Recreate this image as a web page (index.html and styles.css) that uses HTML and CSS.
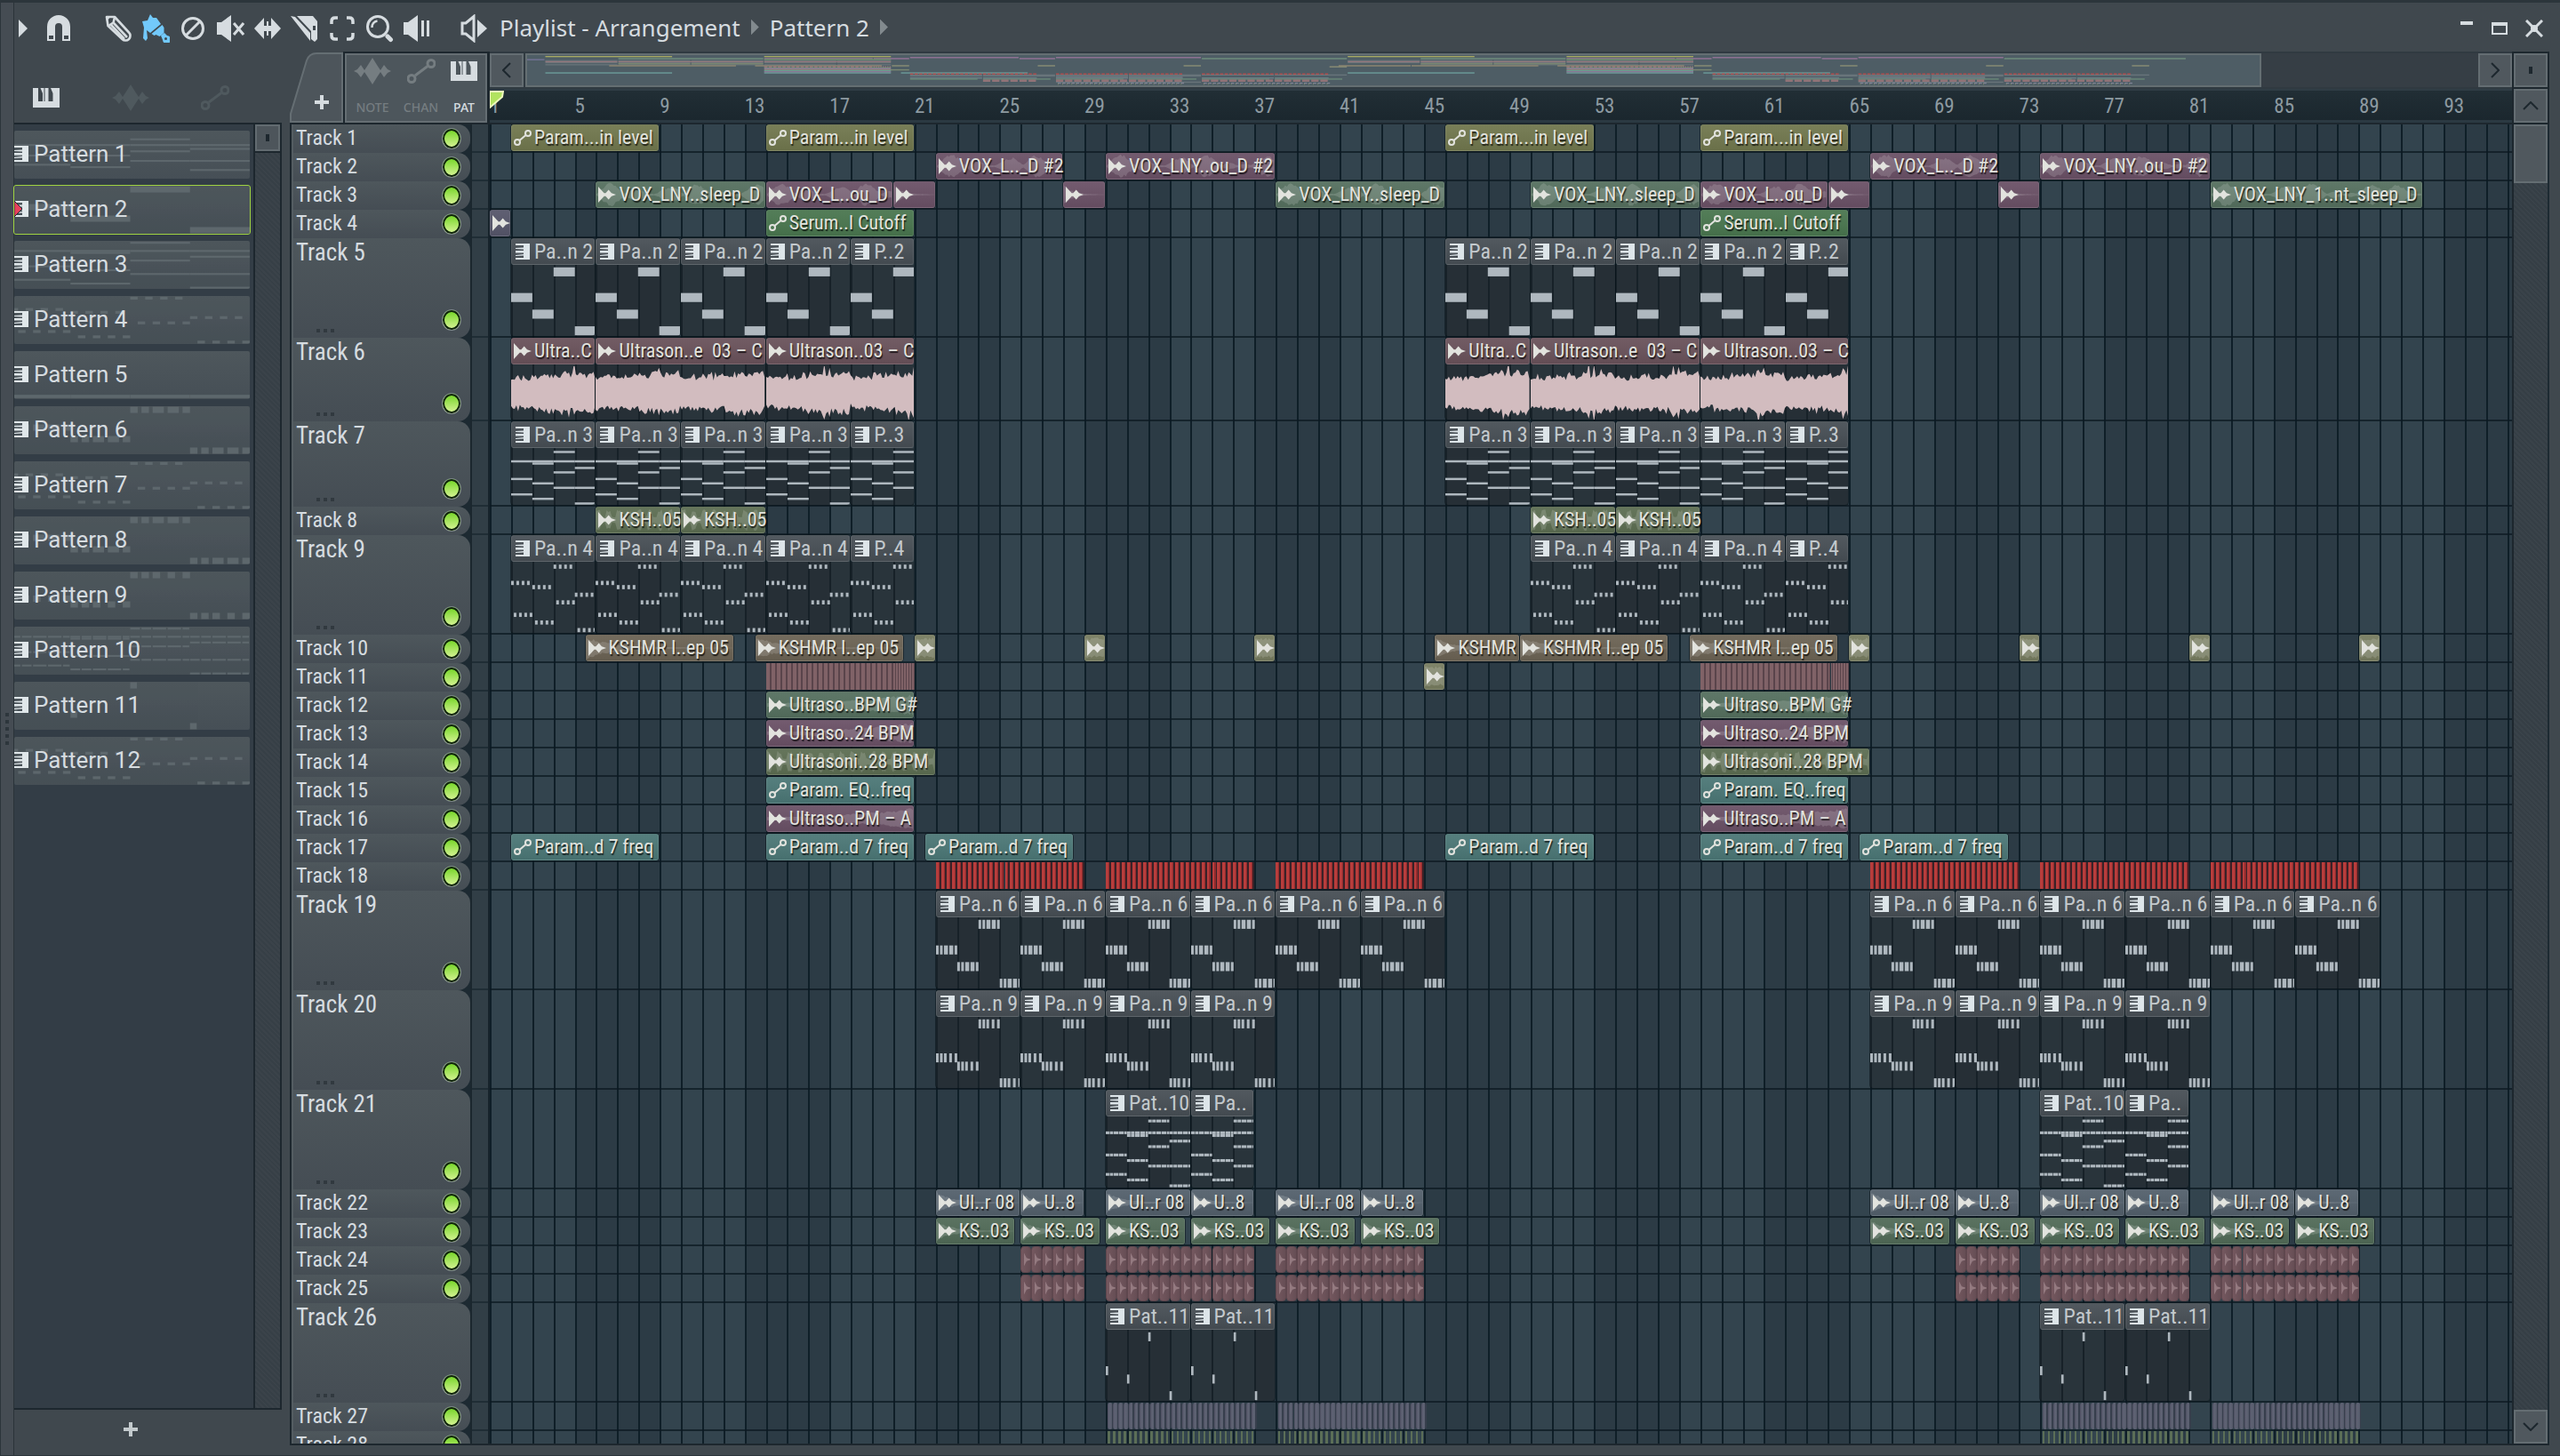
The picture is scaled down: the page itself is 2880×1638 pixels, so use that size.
FILE: index.html
```html
<!DOCTYPE html>
<html lang="en">
<head>
    <meta charset="UTF-8">
    <meta name="viewport" content="width=device-width, initial-scale=1.0">
    <title>Playlist - Arrangement</title>
    <link rel="stylesheet" href="styles.css">
</head>
<body>

    <!-- Shared icons -->
    <svg class="icon-defs" aria-hidden="true">
        <symbol id="i-piano" viewBox="0 0 30 22">
            <path fill="currentColor" d="M0 0h6v15h5V6L8.500 0H12.500v15h1V0h4v15h5V6L20 0h4v15h0V0h6v22H0z"/>
        </symbol>
        <symbol id="i-wave" viewBox="0 0 42 30">
            <path fill="currentColor" d="M0 15l4-2 4-5 4 6 4-6 5-8 5 8 4 6 4-6 4 5 4 2-4 2-4 5-4-6-4 6-5 8-5-8-4-6-4 6-4-5z"/>
        </symbol>
        <symbol id="i-auto" viewBox="0 0 32 28">
            <g fill="none" stroke="currentColor" stroke-width="3">
                <circle cx="5" cy="22.500" r="4"/>
                <circle cx="27" cy="5.500" r="4"/>
                <path d="M9 19L23 8.500"/>
            </g>
        </symbol>
        <symbol id="i-pattern" viewBox="0 0 16 18">
            <path fill="currentColor" d="M0 0h16v18H0v-2h9v-2.500L0 14v-1l9-1v-1.500H0v-2.500h9V6.500L0 6V5l9-.5V2H0z"/>
        </symbol>
        <symbol id="i-audio" viewBox="0 0 18 16">
            <path fill="currentColor" d="M0 0l6 6.500h1.500L10.500 3l3 3.500 4.500 1.500-4.500 1.500-3 3.500-3-3.500H6L0 16z"/>
        </symbol>
        <symbol id="i-node" viewBox="0 0 20 18">
            <g fill="none" stroke="currentColor" stroke-width="2">
                <circle cx="4" cy="14" r="3"/>
                <circle cx="16" cy="4" r="3"/>
                <path d="M6.500 12L13.500 6"/>
            </g>
        </symbol>
        <symbol id="i-plus" viewBox="0 0 16 16">
            <path fill="currentColor" d="M6 0h4v6h6v4h-6v6H6v-6H0V6h6z"/>
        </symbol>
    </svg>

    <div class="window">
        <div class="gutter"><i></i><i></i><i></i><i></i><i></i></div>

        <div class="main">
            <header class="titlebar">
                <button class="tool tool-menu" aria-label="Menu"><svg width="10" height="20" viewBox="0 0 10 20"><path fill="currentColor" d="M0 0l10 10L0 20z"/></svg></button>
                <button class="tool tool-snap" aria-label="Snap"><svg width="32" height="32" viewBox="0 0 32 32"><path fill="currentColor" fill-rule="evenodd" d="M3 30V14a13 13 0 0 1 26 0v16h-9V14a4 4 0 0 0-8 0v16zM5 24h5v4H5zM22 24h5v4h-5z"/></svg></button>

                <div class="tools">
                    <button class="tool" aria-label="Draw"><svg width="32" height="32" viewBox="0 0 32 32"><g fill="none" stroke="currentColor" stroke-width="2.600" stroke-linejoin="round"><path d="M3 3h9l16 17.500a5 5 0 0 1-7.500 7.500L4.500 13z"/><path d="M12 3.500l-1.500 6L5 13M10.500 9.500L26 26M7.500 11.500L23 28"/></g><path fill="currentColor" d="M2 2h6L3 8z"/></svg></button>
                    <button class="tool active" aria-label="Paint"><svg width="32" height="32" viewBox="0 0 32 32"><path fill="currentColor" d="M1 8l6-1 3-7 3 4h4l5 7L10 21l-4-3 1 9-2 3-3-3 1-12zM11.500 22L23.500 12l2 3 0 6-5 4-4-2-2 1zM22 24l4-3 3 3a4.500 4.500 0 1 1-5 5z"/><circle cx="27.500" cy="27.500" r="1.500" fill="#40484e"/></svg></button>
                    <button class="tool" aria-label="Delete"><svg width="32" height="32" viewBox="0 0 32 32"><g fill="none" stroke="currentColor" stroke-width="3"><circle cx="16" cy="16" r="11.500"/><path d="M8 24L24 8"/></g></svg></button>
                    <button class="tool" aria-label="Mute"><svg width="32" height="32" viewBox="0 0 32 32"><path fill="currentColor" d="M1 9h5L17 1v30L6 23H1z"/><path fill="none" stroke="currentColor" stroke-width="3" d="M20 10l11 13M31 10L20 23"/></svg></button>
                    <button class="tool" aria-label="Slip"><svg width="32" height="32" viewBox="0 0 32 32"><path fill="currentColor" d="M1 16L12 4v9h3V8h2v5h3V4l11 12-11 12v-9h-3v5h-2v-5h-3v9z"/></svg></button>
                    <button class="tool" aria-label="Slice"><svg width="32" height="32" viewBox="0 0 32 32"><path fill="currentColor" fill-rule="evenodd" d="M0 2l5 1 17 18V30zM7 2h18l5 6v20l-3 3-4-3V19zM25 13v5h3v-5z"/></svg></button>
                    <button class="tool" aria-label="Select"><svg width="32" height="32" viewBox="0 0 32 32"><path fill="none" stroke="currentColor" stroke-width="3.500" d="M4 11V8q0-4 4-4h3M21 4h3q4 0 4 4v3M28 21v3q0 4-4 4h-3M11 28H8q-4 0-4-4v-3"/></svg></button>
                    <button class="tool" aria-label="Zoom"><svg width="32" height="32" viewBox="0 0 32 32"><g fill="none" stroke="currentColor"><circle cx="14" cy="14" r="11.500" stroke-width="3"/><path stroke-width="2.500" d="M7.500 15a7 7 0 0 1 6-7.500"/><path stroke-width="5" stroke-linecap="round" d="M25 25l3.500 3.500"/></g></svg></button>
                    <button class="tool" aria-label="Play"><svg width="32" height="32" viewBox="0 0 32 32"><path fill="currentColor" d="M1 9h5L17 1v30L6 23H1zM21 7h3v18h-3zM27 7h3v18h-3z"/></svg></button>
                </div>

                <button class="tool tool-speaker" aria-label="Scrub"><svg width="32" height="32" viewBox="0 0 32 32"><path fill="none" stroke="currentColor" stroke-width="3" d="M3 10h4l9-7.500v27L7 22H3z"/><path fill="currentColor" d="M20 6l11 10-11 10z"/></svg></button>
                <nav class="crumbs">
                    <a href="#arrangement">Playlist - Arrangement</a>
                    <span class="crumb-arrow"></span>
                    <a href="#pattern">Pattern 2</a>
                    <span class="crumb-arrow"></span>
                </nav>

                <div class="window-buttons">
                    <button aria-label="Minimize"><svg width="16" height="20" viewBox="0 0 16 20"><path fill="currentColor" d="M1 2h14v4H1z"/></svg></button>
                    <button aria-label="Maximize"><svg width="18" height="20" viewBox="0 0 18 20"><path fill="currentColor" fill-rule="evenodd" d="M0 3h18v14H0zM2 7v8h14V7z"/></svg></button>
                    <button aria-label="Close"><svg width="20" height="20" viewBox="0 0 20 20"><path fill="none" stroke="currentColor" stroke-width="3" d="M1 1l18 18M19 1L1 19"/><circle cx="10" cy="10" r="4" fill="currentColor"/></svg></button>
                </div>
            </header>

            <div class="workspace">
                <aside class="picker">
                    <div class="picker-tabs">
                        <button class="on" aria-label="Patterns"><svg width="30" height="22"><use href="#i-piano"/></svg></button>
                        <button aria-label="Audio"><svg width="42" height="30"><use href="#i-wave"/></svg></button>
                        <button aria-label="Automation"><svg width="32" height="28"><use href="#i-auto"/></svg></button>
                    </div>
                    <div class="picker-body">
                        <ul class="patterns" id="patterns"></ul>
                        <div class="picker-scroll"><button class="square-btn" aria-label="Picker options"><i></i></button></div>
                    </div>
                    <div class="picker-footer">
                        <button aria-label="Add pattern"><svg width="16" height="16"><use href="#i-plus"/></svg></button>
                    </div>
                </aside>

                <section class="playlist">
                    <div class="corner">
                        <button class="add-tab" aria-label="Add track">
                            <svg class="tab-shape" width="60" height="80" viewBox="0 0 60 80"><path d="M1 79V70L19 10Q22 2 30 2H59V79z"/></svg>
                            <svg class="tab-plus" width="16" height="16"><use href="#i-plus"/></svg>
                        </button>
                        <div class="modes">
                            <button><svg width="42" height="30"><use href="#i-wave"/></svg>NOTE</button>
                            <button><svg width="32" height="28"><use href="#i-auto"/></svg>CHAN</button>
                            <button class="on"><svg width="30" height="22"><use href="#i-piano"/></svg>PAT</button>
                        </div>
                    </div>

                    <div class="top">
                        <div class="overview">
                            <button class="frame-btn" aria-label="Scroll left"><svg width="10" height="18" viewBox="0 0 10 18"><path d="M9 1L1 9l8 8"/></svg></button>
                            <div class="overview-track">
                                <svg class="overview-map" id="map" viewBox="0 0 95 34" preserveAspectRatio="none"></svg>
                            </div>
                            <button class="frame-btn" aria-label="Scroll right"><svg width="10" height="18" viewBox="0 0 10 18"><path d="M1 1l8 8-8 8"/></svg></button>
                        </div>
                        <div class="ruler" id="ruler">
                            <svg class="playhead" width="16" height="20" viewBox="0 0 16 20"><path d="M0 1h15L14 7 0 19z"/></svg>
                        </div>
                    </div>

                    <div class="side-top">
                        <button class="frame-btn" aria-label="Playlist options"><i></i></button>
                        <button class="frame-btn" aria-label="Scroll up"><svg width="18" height="10" viewBox="0 0 18 10"><path d="M1 9l8-8 8 8"/></svg></button>
                    </div>

                    <div class="tracks">
                        <ul class="heads" id="heads"></ul>
                        <div class="strip" id="strip"></div>
                        <div class="timeline">
                            <div class="bars" id="bars"></div>
                            <div class="lanes" id="lanes"></div>
                        </div>
                    </div>

                    <div class="side-scroll">
                        <div class="thumb"></div>
                        <button class="frame-btn" aria-label="Scroll down"><svg width="18" height="10" viewBox="0 0 18 10"><path d="M1 1l8 8 8-8"/></svg></button>
                    </div>
                </section>
            </div>
        </div>
    </div>

    <script src="script.js"></script>
</body>
</html>
```
FILE: styles.css
```css
:root {
    /* 95.2 bars are visible in the timeline */
    --bar: calc(100cqw / 95.2);
    --frame: #40484e;
    --edge: #1d272e;
    --panel: #333d46;
    --light: #d6dce0;
    --narrow: "Roboto Condensed", "Liberation Sans", sans-serif;
}

* {
    box-sizing: border-box;
}

body {
    margin: 0;
    background: var(--frame);
    color: var(--light);
    font-family: "Noto Sans", sans-serif;
    overflow: hidden;
}

button {
    margin: 0;
    padding: 0;
    border: 0;
    background: none;
    color: inherit;
    font: inherit;
}

ul {
    margin: 0;
    padding: 0;
    list-style: none;
}

svg {
    display: block;
    flex: none;
}

.icon-defs {
    position: absolute;
    width: 0;
    height: 0;
}

.window {
    display: flex;
    height: 100vh;
    border-top: 3px solid #2c353b;
    border-bottom: 1px solid #2c353b;
}

.gutter {
    flex: none;
    display: flex;
    flex-direction: column;
    align-items: center;
    justify-content: center;
    gap: 4px;
    width: 16px;
    border-left: 1px solid #2c353b;
    border-right: 1px solid #2a3339;
    background: #454c53;
}

.gutter i {
    width: 4px;
    height: 4px;
    background: #2d363c;
}

.main {
    flex: 1;
    min-width: 0;
    display: flex;
    flex-direction: column;
}

/* Title bar */
.titlebar {
    flex: none;
    display: flex;
    align-items: center;
    height: 55px;
    padding-top: 2px;
}

.tool {
    flex: none;
    display: flex;
    align-items: center;
    justify-content: center;
    width: 42px;
    height: 40px;
}

.tool-menu {
    width: 20px;
}

.tool-snap {
    margin-left: 9px;
}

.tools {
    display: flex;
    margin-left: 25px;
}

.active {
    color: #72c9fb;
}

.tool-speaker {
    margin-left: 22px;
}

.crumbs {
    display: flex;
    align-items: center;
    gap: 12px;
    margin-left: 8px;
    padding-bottom: 2px;
    font-size: 26px;
    line-height: 32px;
}

.crumbs a {
    color: var(--light);
    text-decoration: none;
}

.crumb-arrow {
    width: 9px;
    height: 18px;
    background: #828a8e;
    clip-path: polygon(0 0, 100% 50%, 0 100%);
}

.window-buttons {
    display: flex;
    gap: 20px;
    margin-left: auto;
    margin-right: 19px;
}

.workspace {
    flex: 1;
    min-height: 0;
    display: flex;
}

/* Pattern picker */
.picker {
    flex: none;
    display: flex;
    flex-direction: column;
    width: 301px;
    margin-right: 9px;
}

.picker-tabs {
    flex: none;
    display: flex;
    align-items: center;
    height: 80px;
    padding: 24px 0 0 15px;
}

.picker-tabs button {
    display: flex;
    align-items: center;
    justify-content: center;
    width: 42px;
    margin-right: 53px;
    color: #4f595e;
}

.picker-tabs .on {
    color: var(--light);
}

.picker-body {
    flex: 1;
    min-height: 0;
    display: flex;
    border-top: 2px solid var(--edge);
    border-bottom: 2px solid var(--edge);
    border-right: 2px solid var(--edge);
    background: var(--panel);
}

.patterns {
    flex: 1;
    min-width: 0;
    display: flex;
    flex-direction: column;
    gap: 8px;
    padding: 7px 4px 0 0;
}

.pattern {
    position: relative;
    display: flex;
    align-items: center;
    gap: 6px;
    height: 54px;
    padding-bottom: 2px;
    border-radius: 2px;
    background: linear-gradient(#4e575c, #464f56);
    overflow: hidden;
    font: 26px/32px "Roboto", sans-serif;
}

.pattern svg {
    color: #e0e7ea;
}

.pattern .use-icon,
.pattern span {
    position: relative;
}

.pattern .notes {
    position: absolute;
    right: 0;
    top: 0;
    width: calc(100% + 4px);
    height: 100%;
    fill: #636d72;
    opacity: .8;
}

.pattern.selected {
    outline: 1px solid #9fd341;
}

.pattern .marker {
    position: absolute;
    left: 0;
    color: #e8415c;
}

.picker-scroll {
    flex: none;
    width: 30px;
    border-left: 2px solid var(--edge);
    background: repeating-linear-gradient(45deg, #363f46 0 2px, #3b434a 2px 4px);
}

.square-btn {
    display: flex;
    align-items: center;
    justify-content: center;
    width: 28px;
    height: 30px;
    border: 2px solid #626b70;
    background: #4d555b;
    box-shadow: 0 2px 0 var(--edge);
}

.square-btn i,
.frame-btn i {
    width: 4px;
    height: 8px;
    background: #1d272e;
}

.picker-footer {
    flex: none;
    height: 51px;
    padding: 13px 0 0 123px;
    color: #c3cacd;
}

/* Playlist */
.playlist {
    flex: 1;
    min-width: 0;
    display: grid;
    grid-template-columns: 223px 1fr 42px;
    grid-template-rows: 82px minmax(0, 1fr);
    margin: 0 12px 11px 0;
    border-left: 2px solid var(--edge);
    border-bottom: 2px solid var(--edge);
    background: #1d2a32;
}

.corner {
    display: flex;
    background: var(--edge);
    border-bottom: 2px solid var(--edge);
}

.add-tab {
    position: relative;
    width: 60px;
    height: 80px;
    margin-left: -2px;
    background: var(--frame);
}

.tab-shape {
    fill: #4d555b;
    stroke: #656e73;
    stroke-width: 2;
}

.tab-plus {
    position: absolute;
    left: 28px;
    top: 49px;
}

.modes {
    display: flex;
    align-items: flex-start;
    justify-content: space-between;
    flex: 1;
    margin: 2px 3px 0 2px;
    padding: 2px 9px 0 8px;
    border: 2px solid #656e73;
    background: #4d565c;
}

.modes button {
    display: grid;
    grid-template-rows: 32px 50px;
    place-items: center;
    height: 66px;
    font-size: 14px;
    font-weight: 500;
    line-height: 30px;
    color: #757d81;
}

.modes .on {
    color: var(--light);
}

.top {
    container-type: inline-size;
    display: flex;
    flex-direction: column;
    border-bottom: 2px solid var(--edge);
}

.overview {
    display: flex;
    height: 42px;
    padding-top: 2px;
    background: #303a41;
}

.frame-btn {
    flex: none;
    display: flex;
    align-items: center;
    justify-content: center;
    width: 38px;
    height: 38px;
    border: 2px solid #646d72;
    background: #50585e;
}

.frame-btn svg {
    fill: none;
    stroke: #1d272e;
    stroke-width: 2;
}

.overview-track {
    flex: 1;
    height: 38px;
    margin-left: 2px;
    padding-right: 244px;
    background: #363e45;
}

.overview-map {
    width: 100%;
    height: 38px;
    border: 2px solid #646e72;
    background: #4e5d65;
}

.ruler {
    position: relative;
    flex: 1;
    border-top: 2px solid #303d45;
    border-bottom: 3px solid #2b3942;
    background: linear-gradient(#212e35, #1b272e);
    font: 23px/36px var(--narrow);
    color: #8d9aa1;
    overflow: hidden;
}

.ruler span {
    position: absolute;
    top: 0;
}

.playhead {
    position: absolute;
    left: 0;
    top: 0;
    z-index: 1;
    fill: #b2e35f;
    stroke: #eef9bd;
    stroke-width: 2;
}

.side-top {
    display: flex;
    flex-direction: column;
    gap: 2px;
    padding: 2px 0 0 2px;
    background: var(--edge);
}

.side-scroll {
    display: flex;
    flex-direction: column;
    justify-content: space-between;
    margin-right: 2px;
    border-left: 2px solid var(--edge);
    background: repeating-linear-gradient(45deg, #353e45 0 2px, #3a434a 2px 4px);
}

.side-scroll .thumb {
    height: 66px;
    border: 2px solid #646d72;
    background: #50585e;
}

.tracks {
    grid-column: span 2;
    min-height: 0;
    display: grid;
    grid-template-columns: 201px 22px minmax(0, 1fr);
    overflow: hidden;
}

.head {
    position: relative;
    display: flex;
    align-items: flex-end;
    justify-content: space-between;
    height: 32px;
    padding: 0 10px 4px 3px;
    border-left: 2px solid #545d62;
    border-radius: 0 14px 14px 0;
    background: linear-gradient(#4e575c, #454d54);
    font: 24px/30px var(--narrow);
}

.head label {
    align-self: flex-start;
}

.head:not(.h32) {
    font-size: 27px;
    line-height: 32px;
    padding-bottom: 8px;
}

.dots {
    position: absolute;
    left: 26px;
    bottom: 6px;
    display: flex;
    gap: 4px;
}

.dots i {
    width: 4px;
    height: 4px;
    background: #31393f;
}

.head input {
    appearance: none;
    flex: none;
    width: 22px;
    height: 24px;
    margin: 0;
    border: 1px solid #7c8688;
    border-radius: 50%;
    background: linear-gradient(#6fd321, #dcf59b);
    box-shadow: inset 0 0 0 2px #10240c;
}

.h32 { height: 32px; }
.h94 { height: 94px; }
.h96 { height: 96px; }
.h112 { height: 112px; }

.strip {
    border-right: 2px solid #17232b;
    border-left: 2px solid #1b272e;
    background: #313e46;
}

.strip div {
    border-bottom: 2px solid #1f2d35;
}

.timeline {
    container-type: inline-size;
    position: relative;
    min-width: 0;
    background: #2c3b45;
    overflow: hidden;
}

/* Bar lines sit behind the lanes */
.bars {
    position: absolute;
    inset: 0;
    display: flex;
}

.bars i {
    flex: 0 0 var(--bar);
    border-left: 2px solid #0f1f28;
    background: #2c3b45;
}

.bars i:nth-child(8n+1),
.bars i:nth-child(8n+2),
.bars i:nth-child(8n+3),
.bars i:nth-child(8n+4) {
    background: #33444e;
}

.lane {
    position: relative;
    border-bottom: 2px solid rgba(12, 26, 34, .75);
}

/* Clips */
.clip {
    position: absolute;
    top: 0;
    height: 100%;
    border-radius: 3px;
    outline: 1px solid rgba(8, 18, 24, .55);
}

.clip-head {
    position: relative;
    display: flex;
    align-items: center;
    gap: 3px;
    height: 30px;
    padding-left: 2px;
    border-radius: 3px;
    border: 1px solid rgba(255, 255, 255, .08);
    background-image: linear-gradient(rgba(255, 255, 255, .06), rgba(0, 0, 0, .06));
    font: 22px/26px var(--narrow);
    color: #e2e3de;
    white-space: pre;
    text-shadow: 1px 2px 1px rgba(0, 0, 0, .7);
}

.clip-head svg,
.clip-head span {
    position: relative;
}

.clip-head .wave {
    position: absolute;
    inset: 0;
    width: 100%;
    height: 100%;
    fill: rgba(255, 255, 255, .15);
}

.clip-body {
    height: calc(100% - 30px);
    padding-top: 2px;
    background: rgba(32, 36, 40, .5);
    overflow: hidden;
}

.clip-body .notes {
    width: calc(var(--bar) * 4);
    height: 100%;
    fill: #afb8bf;
}

.clip-body .audio {
    width: 100%;
    height: 100%;
    fill: #d2bcbf;
}

.pat { background-color: #474f55; }
.olive { background-color: #71774e; }
.sage { background-color: #55705f; }
.plum { background-color: #6a5166; }
.green { background-color: #49764f; }
.mauve { background-color: #56566a; }
.wine { background-color: #69525a; }
.moss { background-color: #5c6d52; }
.brown { background-color: #6b6354; }
.kick { background-color: #777c60; }
.teal { background-color: #4b7776; }
.slate { background-color: #53606b; }
.fern { background-color: #516a57; }

.pat.clip-head {
    font-size: 24px;
    color: #c3c9cd;
    text-shadow: none;
}

.pat svg {
    color: #dde5e9;
}

.hit {
    position: absolute;
    top: 0;
    height: 100%;
}

.hit.rose {
    background: linear-gradient(90deg, #806267 65%, #5a444b 65%);
}

.hit.red {
    background: linear-gradient(90deg, #b83d3c 0 45%, #922b2d 45% 70%, #3a2228 70%);
}

.hit.dusk {
    border-radius: 3px;
    background: linear-gradient(90deg, #4d4e60, #606475 35%, #565b6b 75%, #373f4d 75%);
}

.hit.dust {
    border-radius: 4px;
    border: 1px solid #5f474e;
    background: linear-gradient(90deg, #75585f, #664e55);
}

.hit.dust svg {
    width: 100%;
    height: 100%;
    fill: #947a80;
}

.hit.leaf {
    background: #5b6e57;
}
```
FILE: script.js
```js
const BARS = 96;

// Track heights in order
const heights = [
    32, 32, 32, 32, 112, 94, 96, 32, 112,
    32, 32, 32, 32, 32, 32, 32, 32, 32,
    112, 112, 112, 32, 32, 32, 32, 112, 32, 32
];

// Notes use a grid of 8 steps per bar, y in percent of the body height
const long = [[0, 8]];
const block6 = [[0, 1], [1.5, 1], [3, 1.5], [5, 1.5], [7, 1]];
const block9 = [[0, 1], [1.5, 1], [3, 1], [5, 1], [7, 1]];
const even = [[0, 1], [2, 1], [4, 1], [6, 1]];
const odd = [[1, 1], [3, 1], [5, 1], [7, 1]];
const split = [[0, 1.3], [1.5, 1.3], [3, 1.8], [5, 1.8], [7, .9]];
const dot = [[0, .9]];

function chordRows(steps) {
    return [
        [2, 2, steps], [0, 19, steps], [1, 19, steps], [2, 19, steps], [3, 19, steps],
        [1, 23, steps], [3, 31, steps], [2, 39, steps], [0, 51, steps], [1, 59, steps],
        [2, 67, steps], [3, 67, steps], [0, 79, steps], [1, 87, steps], [3, 95.5, steps]
    ].map(r => [...r, 4]);
}

const arp = [
    [0, 25, even, 6], [0, 71, odd, 6], [1, 31, even, 6], [1, 82, odd, 6],
    [2, 1.5, even, 6], [2, 53, odd, 6], [3, 42, even, 6], [3, 93, odd, 6]
];

const notes = {
    1: [[2, 16, long, 4], [3, 36, long, 4], [2, 28, long, 4], [3, 28, long, 4], [0, 28, long, 4], [1, 28, long, 4],
        [2, 41, long, 4], [0, 50, long, 4], [1, 50, long, 4], [2, 61, long, 4], [3, 61, long, 4], [0, 69, long, 4], [1, 74, long, 4], [3, 80, long, 4]],
    2: [[0, 38, long, 13], [1, 62, long, 13], [2, 1, long, 13], [3, 86, long, 13]],
    3: chordRows(long),
    4: arp,
    5: [[0, 91, long, 7], [1, 91, long, 7], [2, 91, long, 7], [3, 91, long, 7]],
    6: [[0, 38, block6, 13], [1, 62, block6, 13], [2, 1, block6, 13], [3, 86, block6, 13]],
    7: arp,
    8: [[0, 38, block6, 13], [1, 62, block6, 13], [2, 1, block6, 13], [3, 86, block6, 13]],
    9: [[0, 50, block9, 13], [1, 62, block9, 13], [2, 1, block9, 13], [3, 86, block9, 13]],
    10: chordRows(split),
    11: [[0, 50, dot, 13], [1, 62, dot, 13], [2, 1, dot, 13], [3, 86, dot, 13]],
    12: arp
};

// Clips: [track, start, end, label, colour, kind, wave or pattern number]
const clips = [];
const hits = [];

function add(track, start, end, label, color, kind, extra) {
    clips.push({ track, start, end, label, color, kind, extra });
}

// The second half of the song repeats 44 bars later
function twice(...args) {
    add(...args);
    const [track, start, end, ...rest] = args;
    add(track, start + 44, end + 44, ...rest);
}

function hitRow(track, start, end, step, color, width) {
    [0, 44].forEach(offset => {
        for (let b = start; b < end - .01; b += step) {
            hits.push({ track, start: b + offset, width: width || step, color });
        }
    });
}

twice(1, 1, 8, 'Param...in level', 'olive', 'node');
twice(1, 13, 20, 'Param...in level', 'olive', 'node');

twice(2, 21, 27, 'VOX_L.._D #2', 'plum', 'audio', 'vox');
twice(2, 29, 37, 'VOX_LNY..ou_D #2', 'plum', 'audio', 'vox');

twice(3, 5, 13, 'VOX_LNY..sleep_D', 'sage', 'audio', 'vox');
twice(3, 13, 19, 'VOX_L..ou_D', 'plum', 'audio', 'vox');
twice(3, 19, 21, '', 'plum', 'audio', 'decay');
twice(3, 27, 29, '', 'plum', 'audio', 'decay');
add(3, 37, 45, 'VOX_LNY..sleep_D', 'sage', 'audio', 'vox');
add(3, 81, 91, 'VOX_LNY_1..nt_sleep_D', 'sage', 'audio', 'vox');

add(4, 0, 1, '', 'mauve', 'audio');
twice(4, 13, 20, 'Serum..l Cutoff', 'green', 'node');

[[5, 2], [7, 3], [9, 4]].forEach(([track, num]) => {
    [1, 5, 9, 13].forEach(b => {
        if (track === 9 && b === 1) {
            add(track, b, b + 4, 'Pa..n ' + num, 'pat', 'pattern', num);
        } else {
            twice(track, b, b + 4, 'Pa..n ' + num, 'pat', 'pattern', num);
        }
    });
    twice(track, 17, 20, 'P..' + num, 'pat', 'pattern', num);
});

twice(6, 1, 5, 'Ultra..C', 'wine', 'audio', 'flat');
twice(6, 5, 13, 'Ultrason..e  03 – C', 'wine', 'audio', 'flat');
twice(6, 13, 20, 'Ultrason..03 – C', 'wine', 'audio', 'flat');

twice(8, 5, 9, 'KSH..05', 'moss', 'audio', 'beats');
twice(8, 9, 13, 'KSH..05', 'moss', 'audio', 'beats');

add(10, 4.5, 11.5, 'KSHMR I..ep 05', 'brown', 'audio', 'decay');
twice(10, 12.5, 19.5, 'KSHMR I..ep 05', 'brown', 'audio', 'decay');
add(10, 44.5, 48.5, 'KSHMR', 'brown', 'audio', 'decay');
add(10, 48.5, 55.5, 'KSHMR I..ep 05', 'brown', 'audio', 'decay');
[20, 28, 36].forEach(b => twice(10, b, b + 1, '', 'kick', 'audio', 'flat'));
add(10, 88, 89, '', 'kick', 'audio', 'flat');
add(11, 44, 45, '', 'kick', 'audio', 'flat');

hitRow(11, 13, 19, .25, 'rose');
hitRow(11, 19, 20, .125, 'rose');

twice(12, 13, 20, 'Ultraso..BPM G#', 'sage', 'audio', 'rise');
twice(13, 13, 20, 'Ultraso..24 BPM', 'plum', 'audio', 'rise');
twice(14, 13, 21, 'Ultrasoni..28 BPM', 'moss', 'audio', 'beats');
twice(15, 13, 20, 'Param. EQ..freq', 'teal', 'node');
twice(16, 13, 20, 'Ultraso..PM – A', 'plum', 'audio', 'rise');
twice(17, 1, 8, 'Param..d 7 freq', 'teal', 'node');
twice(17, 13, 20, 'Param..d 7 freq', 'teal', 'node');
twice(17, 20.5, 27.5, 'Param..d 7 freq', 'teal', 'node');

[21, 29, 37].forEach(b => hitRow(18, b, b + 7, .25, 'red'));

[21, 25, 29, 33, 37, 41].forEach(b => twice(19, b, b + 4, 'Pa..n 6', 'pat', 'pattern', 6));
[21, 25, 29, 33].forEach(b => twice(20, b, b + 4, 'Pa..n 9', 'pat', 'pattern', 9));
twice(21, 29, 33, 'Pat..10', 'pat', 'pattern', 10);
twice(21, 33, 36, 'Pa..', 'pat', 'pattern', 10);

[21, 29, 37].forEach(b => {
    twice(22, b, b + 4, 'Ul..r 08', 'slate', 'audio', 'decay');
    twice(22, b + 4, b + 7, 'U..8', 'slate', 'audio', 'decay');
    twice(23, b, b + 3.75, 'KS..03', 'fern', 'audio', 'decay');
    twice(23, b + 4, b + 7.75, 'KS..03', 'fern', 'audio', 'decay');
});

[24, 25].forEach(track => {
    hitRow(track, 25, 28, .5, 'dust');
    hitRow(track, 29, 36, .5, 'dust');
    hitRow(track, 37, 44, .5, 'dust');
});

twice(26, 29, 33, 'Pat..11', 'pat', 'pattern', 11);
twice(26, 33, 37, 'Pat..11', 'pat', 'pattern', 11);

hitRow(27, 29.1, 36.1, .25, 'dusk');
hitRow(27, 37.1, 44.1, .25, 'dusk');
hitRow(28, 29.1, 36, .25, 'leaf', .1);
hitRow(28, 37.1, 44, .25, 'leaf', .1);

const place = (start, width) =>
    `left: calc(var(--bar) * ${start}); width: calc(var(--bar) * ${width} - 1px);`;

function noteSvg(num) {
    const rects = notes[num].map(([bar, y, steps, h]) =>
        steps.map(([x, w]) => `<rect x="${bar * 8 + x}" y="${y}" width="${w}" height="${h}"/>`).join('')
    ).join('');
    return `<svg class="notes" viewBox="0 0 32 100" preserveAspectRatio="none">${rects}</svg>`;
}

let seed = 7;
function rand() {
    seed = (seed * 16807) % 2147483647;
    return seed / 2147483647;
}

// Mirrored outline, a point every two pixels or so
function wavePath(bars, level) {
    const n = Math.round(bars * 12);
    const up = [];
    const down = [];
    for (let i = 0; i <= n; i++) {
        const t = i / n;
        const x = (t * 100).toFixed(2);
        up.push(`${x} ${(50 - level(t, i) * (.7 + rand() * .3)).toFixed(1)}`);
        down.unshift(`${x} ${(50 + level(t, i) * (.7 + rand() * .3)).toFixed(1)}`);
    }
    return `M${up.join('L')}L${down.join('L')}Z`;
}

const levels = {
    vox: (t, i) => Math.abs(Math.sin(i * .19) * Math.sin(i * .07 + 1)) * 46 + 3,
    decay: t => 44 * Math.exp(-t * 5) + 1,
    rise: t => 8 + 36 * t * t,
    flat: () => 42,
    beats: (t, i) => (i % 6 < 3 ? 44 : 14)
};

// Loud sustained material, swelling every four bars
function synthLevel(t, i) {
    const p = (i % 48) / 48;
    return 28 + p * 12 + (i % 48 === 33 || i % 48 === 36 ? 14 : 0) + rand() * 8;
}

function clipHtml(c) {
    const tall = heights[c.track - 1] > 32;
    let wave = '';
    if (c.kind === 'audio' && c.extra && !tall) {
        wave = `<svg class="wave" viewBox="0 0 100 100" preserveAspectRatio="none"><path d="${wavePath(c.end - c.start, levels[c.extra])}"/></svg>`;
    }
    let body = '';
    if (tall && c.kind === 'pattern') {
        body = `<div class="clip-body">${noteSvg(c.extra)}</div>`;
    } else if (tall) {
        body = `<div class="clip-body"><svg class="audio" viewBox="0 0 100 100" preserveAspectRatio="none"><path d="${wavePath(c.end - c.start, synthLevel)}"/></svg></div>`;
    }
    const label = c.label ? `<span>${c.label}</span>` : '';
    return `<div class="clip" style="${place(c.start, c.end - c.start)}">` +
        `<div class="clip-head ${c.color}">${wave}<svg width="20" height="18"><use href="#i-${c.kind}"/></svg>${label}</div>${body}</div>`;
}

function hitHtml(h) {
    const shape = h.color === 'dust'
        ? '<svg viewBox="0 0 10 30" preserveAspectRatio="none"><path d="M3 7L6 13 10 14.500V15.500L6 17 3 23z"/></svg>' : '';
    return `<div class="hit ${h.color}" style="left: calc(var(--bar) * ${h.start}); width: calc(var(--bar) * ${h.width});">${shape}</div>`;
}

// Tracks
const dots = '<span class="dots"><i></i><i></i><i></i></span>';
heights.forEach((height, i) => {
    const n = i + 1;
    document.getElementById('heads').insertAdjacentHTML('beforeend',
        `<li class="head h${height}"><label for="track-${n}">Track ${n}</label>${height > 32 ? dots : ''}<input type="checkbox" id="track-${n}" checked></li>`);
    document.getElementById('strip').insertAdjacentHTML('beforeend', `<div class="h${height}"></div>`);
    const inside = clips.filter(c => c.track === n).map(clipHtml).join('') +
        hits.filter(h => h.track === n).map(hitHtml).join('');
    document.getElementById('lanes').insertAdjacentHTML('beforeend', `<div class="lane h${height}">${inside}</div>`);
});

document.getElementById('bars').innerHTML = '<i></i>'.repeat(BARS);

for (let b = 1; b < BARS - 1; b += 4) {
    document.getElementById('ruler').insertAdjacentHTML('beforeend',
        `<span style="left: calc(var(--bar) * ${b - 1});">${b}</span>`);
}

// Pattern picker
for (let n = 1; n <= 12; n++) {
    const marker = n === 2
        ? '<svg class="marker" width="10" height="18" viewBox="0 0 10 18"><path fill="currentColor" stroke="#1d272e" d="M0 0l9 9-9 9z"/></svg>' : '';
    document.getElementById('patterns').insertAdjacentHTML('beforeend',
        `<li class="pattern${n === 2 ? ' selected' : ''}">${noteSvg(n)}<svg class="use-icon" width="16" height="18"><use href="#i-pattern"/></svg><span>Pattern ${n}</span>${marker}</li>`);
}

// Overview map
const mapColors = {
    olive: '#a9ab62', sage: '#73937f', plum: '#9a759b', green: '#6e9c68', mauve: '#77769b',
    wine: '#95787d', moss: '#7d8a72', brown: '#968b72', kick: '#8f9277', teal: '#6ea19e',
    slate: '#71808b', fern: '#6b8c79', pat: '#69757b', rose: '#a47d80', red: '#bb4d4d',
    dust: '#9c777c', dusk: '#7f8496', leaf: '#828c6b'
};
document.getElementById('map').innerHTML = clips.concat(hits).map(c => {
    const width = (c.end ? c.end - c.start : c.width * .9);
    return `<rect x="${c.start}" y="${1 + (c.track - 1) * 1.15}" width="${width - .05}" height="1.3" fill="${mapColors[c.color]}"/>`;
}).join('');
```
